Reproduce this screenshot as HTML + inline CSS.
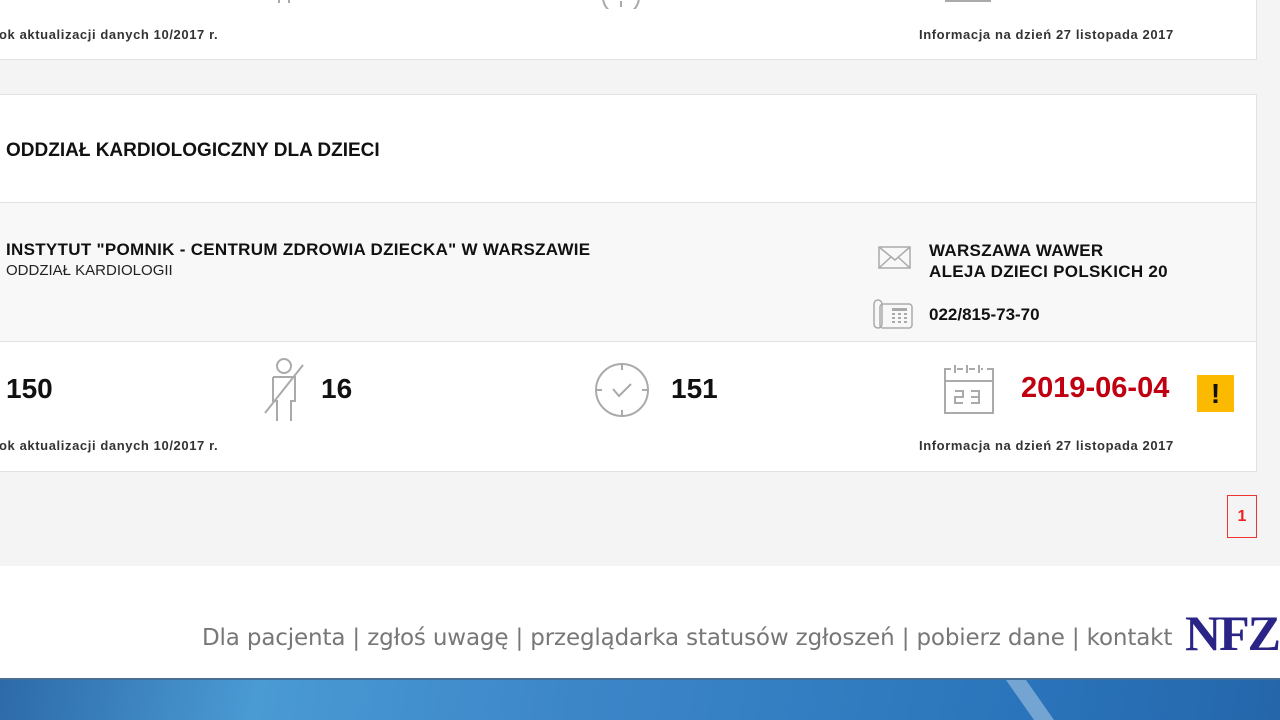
<!DOCTYPE html>
<html><head><meta charset="utf-8"><style>
*{margin:0;padding:0;box-sizing:border-box}
body{width:1280px;height:720px;overflow:hidden;background:#f4f4f4;font-family:"Liberation Sans",Arial,sans-serif;position:relative;color:#111}
.abs{position:absolute}
.card{position:absolute;left:-2px;width:1259px;border:1px solid #e2e2e2;background:#fff}
.small{font-size:13px;font-weight:bold;color:#333;letter-spacing:0.6px;white-space:nowrap}
.big{font-size:28px;font-weight:bold}
</style></head><body>
<div class="card" style="top:-10px;height:70px">
  <svg class="abs" style="left:270px;top:0" width="30" height="22"><path d="M10 0v12M20 0v12" stroke="#aaa" stroke-width="2" fill="none"/></svg>
  <svg class="abs" style="left:600px;top:0" width="44" height="18"><path d="M4 6a18 18 0 0 0 36 0" stroke="#aaa" stroke-width="2" fill="none"/><path d="M22 10v6" stroke="#aaa" stroke-width="2"/></svg>
  <svg class="abs" style="left:945px;top:0" width="50" height="16"><path d="M2 4v6h44v-6" stroke="#aaa" stroke-width="2" fill="none"/></svg>
  <div class="abs small" style="left:0;top:36px">ok aktualizacji danych 10/2017 r.</div>
  <div class="abs small" style="left:920px;top:36px">Informacja na dzień 27 listopada 2017</div>
</div>
<div class="card" style="top:94px;height:378px">
  <div class="abs" style="left:7px;top:45px;font-size:19px;font-weight:bold;color:#111;white-space:nowrap">ODDZIAŁ KARDIOLOGICZNY DLA DZIECI</div>
  <div class="abs" style="left:0;top:107px;width:1257px;height:140px;background:#f8f8f8;border-top:1px solid #e4e4e4;border-bottom:1px solid #e4e4e4"></div>
  <div class="abs" style="left:7px;top:145px;font-size:17px;font-weight:bold;letter-spacing:0.3px;white-space:nowrap">INSTYTUT "POMNIK - CENTRUM ZDROWIA DZIECKA" W WARSZAWIE</div>
  <div class="abs" style="left:7px;top:167px;font-size:15px;color:#222">ODDZIAŁ KARDIOLOGII</div>
  <svg class="abs" style="left:879px;top:150px" width="34" height="26"><rect x="1" y="2" width="31" height="21" fill="none" stroke="#aaa" stroke-width="1.5"/><path d="M1 2l16 13 15-13M1 23l12-11M32 23l-12-11" stroke="#aaa" stroke-width="1.5" fill="none"/></svg>
  <div class="abs" style="left:930px;top:145px;font-size:17px;font-weight:bold;line-height:21px;letter-spacing:0.3px;white-space:nowrap">WARSZAWA WAWER<br>ALEJA DZIECI POLSKICH 20</div>
  <svg class="abs" style="left:873px;top:203px" width="42" height="32"><rect x="2" y="2" width="8" height="28" rx="4" fill="none" stroke="#aaa" stroke-width="1.5"/><rect x="8" y="6" width="32" height="24" rx="3" fill="none" stroke="#aaa" stroke-width="1.5"/><g fill="#aaa"><rect x="20" y="10" width="15" height="3"/><rect x="20" y="15" width="3" height="2"/><rect x="26" y="15" width="3" height="2"/><rect x="32" y="15" width="3" height="2"/><rect x="20" y="19" width="3" height="2"/><rect x="26" y="19" width="3" height="2"/><rect x="32" y="19" width="3" height="2"/><rect x="20" y="23" width="3" height="2"/><rect x="26" y="23" width="3" height="2"/><rect x="32" y="23" width="3" height="2"/></g></svg>
  <div class="abs" style="left:930px;top:210px;font-size:17px;font-weight:bold">022/815-73-70</div>
  <div class="abs big" style="left:7px;top:278px">150</div>
  <svg class="abs" style="left:262px;top:262px" width="46" height="68"><circle cx="23" cy="9" r="7" fill="none" stroke="#aaa" stroke-width="2"/><path d="M12 20h22v24h-4v20M12 20v24h4v20" stroke="#aaa" stroke-width="2" fill="none"/><path d="M4 56L42 8" stroke="#aaa" stroke-width="2"/></svg>
  <div class="abs big" style="left:322px;top:278px">16</div>
  <svg class="abs" style="left:595px;top:267px" width="56" height="56"><circle cx="28" cy="28" r="26" fill="none" stroke="#aaa" stroke-width="2"/><path d="M28 2v6M28 48v6M2 28h6M48 28h6M19 27l6 7 12-12" stroke="#aaa" stroke-width="2" fill="none"/></svg>
  <div class="abs big" style="left:672px;top:278px">151</div>
  <svg class="abs" style="left:944px;top:268px" width="52" height="52"><path d="M8 6h-6v44h48v-44h-6M14 6h6M26 6h6M38 6h2" stroke="#aaa" stroke-width="2" fill="none"/><path d="M12 2v8M24 2v8M36 2v8M2 18h48" stroke="#aaa" stroke-width="2"/><path d="M12 28h8v6h-8v6h8M28 28h8v12h-8M28 34h8" stroke="#aaa" stroke-width="2" fill="none"/></svg>
  <div class="abs big" style="left:1022px;top:277px;color:#c00010;font-size:29px">2019-06-04</div>
  <div class="abs" style="left:1198px;top:280px;width:37px;height:37px;background:#fbb900;text-align:center;font-size:28px;font-weight:bold;line-height:37px">!</div>
  <div class="abs small" style="left:0;top:343px">ok aktualizacji danych 10/2017 r.</div>
  <div class="abs small" style="left:920px;top:343px">Informacja na dzień 27 listopada 2017</div>
</div>
<div class="abs" style="left:1227px;top:495px;width:30px;height:43px;border:1px solid #e33;color:#e22;font-weight:bold;font-size:16px;text-align:center;line-height:41px">1</div>
<div class="abs" style="left:0;top:566px;width:1280px;height:113px;background:#fff"></div>
<div class="abs" style="left:202px;top:625px;font-family:'DejaVu Sans',sans-serif;font-size:23px;color:#777;letter-spacing:-0.15px;white-space:nowrap">Dla pacjenta | zgłoś uwagę | przeglądarka statusów zgłoszeń | pobierz dane | kontakt</div>
<div class="abs" style="left:1185px;top:604px;font-family:'Liberation Serif',serif;font-weight:bold;font-size:50px;color:#2a2486;letter-spacing:-2px">NFZ</div>
<div class="abs" style="left:0;top:678px;width:1280px;height:42px;border-top:2px solid #4a6f96;background:linear-gradient(100deg,#2d6aaa 0%,#4a9ad4 20%,#3c86c8 45%,#2a74bb 80%,#2566aa 100%)"></div>
<div class="abs" style="left:1020px;top:680px;width:20px;height:40px;background:rgba(255,255,255,0.35);transform:skewX(35deg)"></div>
</body></html>
